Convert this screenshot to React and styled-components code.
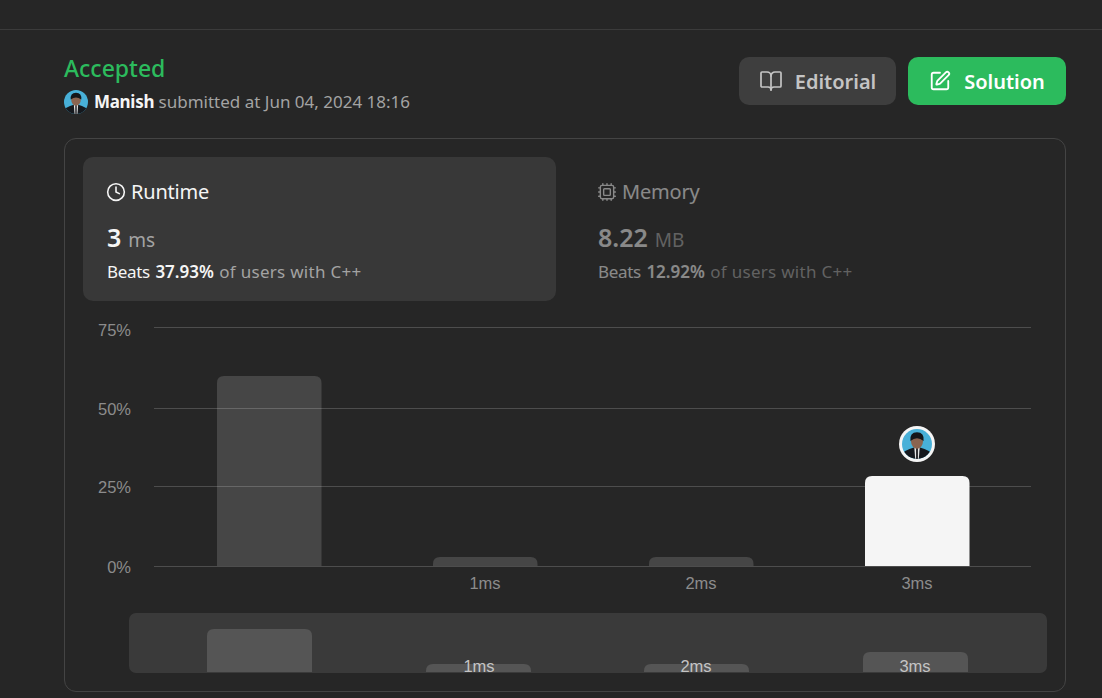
import React from 'react';
import styled, { createGlobalStyle } from 'styled-components';
import { BookOpen, Clock, Cpu, SquarePen } from 'lucide-react';

const GlobalStyle = createGlobalStyle`
  html, body {
    margin: 0;
    background: #262626;
    overflow: hidden;
  }
  * {
    box-sizing: border-box;
  }
`;

const Page = styled.div`
  width: 1102px;
  height: 698px;
  font-family: "Noto Sans", "Open Sans", sans-serif;
  color: #f5f5f5;
`;

const TopBar = styled.div`
  height: 30px;
  border-bottom: 1px solid #3b3b3b;
`;

const Content = styled.main`
  padding: 27px 36px 0 64px;
`;

const Header = styled.header`
  display: flex;
  justify-content: space-between;
  align-items: flex-start;
`;

const Status = styled.h1`
  margin: -1px 0 0;
  font-size: 23px;
  line-height: 24px;
  font-weight: 500;
  color: #2cbb5d;
`;

const SubmittedBy = styled.div`
  display: flex;
  align-items: center;
  gap: 6px;
  margin-top: 10px;
  font-size: 17px;
  line-height: 24px;
  color: #a3a3a3;

  strong {
    color: #f5f5f5;
    font-weight: 700;
    letter-spacing: -0.3px;
  }
`;

const Actions = styled.div`
  display: flex;
  gap: 12px;
`;

const ActionButton = styled.button`
  display: flex;
  align-items: center;
  justify-content: center;
  gap: ${(p) => (p.$primary ? '13px' : '12px')};
  width: ${(p) => (p.$primary ? '158px' : '157px')};
  height: 48px;
  border: 0;
  border-radius: 10px;
  background: ${(p) => (p.$primary ? '#2cbb5d' : '#3e3e3e')};
  color: ${(p) => (p.$primary ? '#ffffff' : '#c4c4c4')};
  font-family: inherit;
  font-size: 20px;
  font-weight: 600;
`;

const Card = styled.section`
  height: 554px;
  margin-top: 24px;
  padding: 18px;
  border: 1px solid #444444;
  border-radius: 12px;
`;

const Tabs = styled.div`
  display: flex;
  gap: 18px;
`;

const Tab = styled.div`
  width: 473px;
  height: 144px;
  padding: 22px 24px;
  border-radius: 10px;
  background: ${(p) => (p.$active ? '#383838' : 'transparent')};
  opacity: ${(p) => (p.$active ? 1 : 0.48)};
`;

const TabTitle = styled.div`
  display: flex;
  align-items: center;
  gap: 5px;
  margin-left: -1px;
  font-size: 20px;
  line-height: 26px;
  letter-spacing: -0.2px;
`;

const Value = styled.div`
  display: flex;
  align-items: baseline;
  gap: 7px;
  margin-top: 16px;
  font-size: 19px;
  line-height: 32px;
  color: #a3a3a3;

  strong {
    font-size: 25px;
    font-weight: 600;
    color: #f5f5f5;
  }
`;

const Beats = styled.div`
  margin-top: 4px;
  font-size: 17px;
  line-height: 24px;
  color: #a3a3a3;

  span {
    color: #f5f5f5;
    letter-spacing: -0.3px;
    margin-right: 1px;
  }

  strong {
    color: #f5f5f5;
    font-weight: 600;
    margin-right: 1px;
  }

  em {
    font-style: normal;
    letter-spacing: 0.28px;
  }
`;

const Chart = styled.svg`
  display: block;
  margin-top: 15px;
  font-family: "Liberation Sans", Arial, sans-serif;
  font-size: 16.5px;
`;

const bars = [
  { x: 217, top: 376 },
  { x: 433, top: 557, label: '1ms' },
  { x: 649, top: 557, label: '2ms' },
  { x: 865, top: 476, label: '3ms', current: true },
];

const miniBars = [
  { x: 207, top: 629 },
  { x: 426, top: 664, label: '1ms', cx: 479 },
  { x: 644, top: 664, label: '2ms', cx: 696 },
  { x: 863, top: 652, label: '3ms', cx: 915 },
];

const gridLines = [
  { y: 327, label: '75%', textY: 336 },
  { y: 408, label: '50%', textY: 415 },
  { y: 486, label: '25%', textY: 493 },
  { y: 566, label: '0%', textY: 573 },
];

const barPath = (x, top, bottom, w = 104.5, r = 7) =>
  `M${x} ${bottom}V${top + r}Q${x} ${top} ${x + r} ${top}H${x + w - r}Q${x + w} ${top} ${x + w} ${top + r}V${bottom}Z`;

// small portrait, the profile picture is not available as a file
const Portrait = ({ cx, cy, r, id }) => (
  <g>
    <clipPath id={id}>
      <circle cx={cx} cy={cy} r={r} />
    </clipPath>
    <g clipPath={`url(#${id})`}>
      <rect x={cx - r} y={cy - r} width={r * 2} height={r * 2} fill="#48b0d8" />
      <path
        d={`M${cx - r} ${cy + r}V${cy + r * 0.62}Q${cx - r * 0.5} ${cy + r * 0.25} ${cx} ${cy + r * 0.2}Q${cx + r * 0.5} ${cy + r * 0.25} ${cx + r} ${cy + r * 0.62}V${cy + r}Z`}
        fill="#15181d"
      />
      <path
        d={`M${cx - r * 0.18} ${cy + r * 0.2}H${cx + r * 0.18}L${cx + r * 0.12} ${cy + r}H${cx - r * 0.12}Z`}
        fill="#e6e6e6"
      />
      <path
        d={`M${cx - r * 0.06} ${cy + r * 0.25}H${cx + r * 0.06}V${cy + r}H${cx - r * 0.06}Z`}
        fill="#1b1b1f"
      />
      <ellipse cx={cx} cy={cy - r * 0.18} rx={r * 0.4} ry={r * 0.5} fill="#8a6450" />
      <path
        d={`M${cx - r * 0.44} ${cy - r * 0.2}Q${cx - r * 0.5} ${cy - r * 0.78} ${cx} ${cy - r * 0.78}Q${cx + r * 0.5} ${cy - r * 0.78} ${cx + r * 0.44} ${cy - r * 0.2}Q${cx} ${cy - r * 0.56} ${cx - r * 0.44} ${cy - r * 0.2}Z`}
        fill="#14161a"
      />
    </g>
  </g>
);

const App = () => {
  return (
    <Page>
      <GlobalStyle />
      <TopBar />
      <Content>
        <Header>
          <div>
            <Status>Accepted</Status>
            <SubmittedBy>
              <svg width="24" height="24" viewBox="0 0 24 24">
                <Portrait cx={12} cy={12} r={12} id="head-avatar" />
              </svg>
              <span>
                <strong>Manish</strong> submitted at Jun 04, 2024 18:16
              </span>
            </SubmittedBy>
          </div>
          <Actions>
            <ActionButton>
              <BookOpen size={24} strokeWidth={1.7} />
              Editorial
            </ActionButton>
            <ActionButton $primary>
              <SquarePen size={22} strokeWidth={2} />
              Solution
            </ActionButton>
          </Actions>
        </Header>
        <Card>
          <Tabs>
            <Tab $active>
              <TabTitle>
                <Clock size={20} strokeWidth={1.9} />
                Runtime
              </TabTitle>
              <Value>
                <strong>3</strong> ms
              </Value>
              <Beats>
                <span>Beats</span> <strong>37.93%</strong> <em>of users with C++</em>
              </Beats>
            </Tab>
            <Tab>
              <TabTitle>
                <Cpu size={20} strokeWidth={1.7} />
                Memory
              </TabTitle>
              <Value>
                <strong>8.22</strong> MB
              </Value>
              <Beats>
                <span>Beats</span> <strong>12.92%</strong> <em>of users with C++</em>
              </Beats>
            </Tab>
          </Tabs>
          <Chart width="964" height="365" viewBox="83 316 964 365">
            {gridLines.map((l) => (
              <g key={l.label}>
                <line x1="154" x2="1031" y1={l.y + 0.5} y2={l.y + 0.5} stroke="#4d4d4d" />
                <text x="131" y={l.textY} textAnchor="end" fill="#8c8c8c">
                  {l.label}
                </text>
              </g>
            ))}
            {bars.map((b) => (
              <g key={b.x}>
                <path
                  d={barPath(b.x, b.top, 566)}
                  fill={b.current ? '#f5f5f5' : '#ffffff'}
                  fillOpacity={b.current ? 1 : 0.15}
                />
                {b.label && (
                  <text x={b.x + 52} y="589" textAnchor="middle" fill="#8c8c8c">
                    {b.label}
                  </text>
                )}
              </g>
            ))}
            <circle cx="917" cy="444" r="18" fill="#f5f5f5" />
            <Portrait cx={917} cy={444} r={15} id="bar-avatar" />
            <rect x="129" y="613" width="918" height="60" rx="7" fill="#3a3a3a" />
            {miniBars.map((b) => (
              <g key={b.x}>
                <path d={barPath(b.x, b.top, 672, 105)} fill="#555555" />
                {b.label && (
                  <text x={b.cx} y="672" textAnchor="middle" fill="#c4c4c4">
                    {b.label}
                  </text>
                )}
              </g>
            ))}
          </Chart>
        </Card>
      </Content>
    </Page>
  );
};

export default App;
